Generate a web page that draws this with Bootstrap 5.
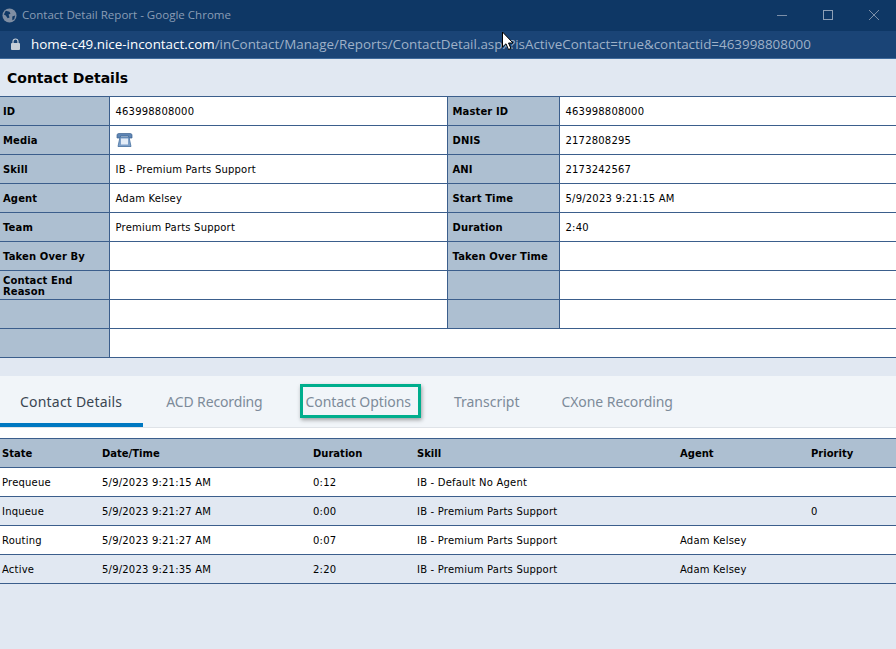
<!DOCTYPE html>
<html lang="en"><head><meta charset="utf-8"><title>Contact Detail Report</title>
<link href="https://cdn.jsdelivr.net/npm/bootstrap@5.3.0/dist/css/bootstrap.min.css" rel="stylesheet">
<style>
html,body{height:100%}
body{width:896px;height:649px;overflow:hidden;background:#e1e8f2;font-family:"DejaVu Sans",sans-serif;font-size:10px;letter-spacing:.2px;color:#000;position:relative}
.win-title{height:31px;background:#0e3765;color:#8a9db5;font:11.55px "Open Sans",sans-serif;letter-spacing:0;padding-left:2px}
.win-title .ttl{margin-left:5px;margin-bottom:2px}
.win-title svg{margin-bottom:1px}
.win-ctrls{margin-left:auto;gap:34px;padding-right:16px}
.addr{height:28px;background:#1a4476;border-bottom:1px solid #3e6a9c;font:13.4px "Open Sans",sans-serif;letter-spacing:0;color:#9fb1c8;padding-left:11px;padding-bottom:2px;white-space:nowrap}
.addr b{font-weight:400;color:#fff}
.addr svg{margin-right:11px}
.heading{height:37px;font-weight:700;font-size:14px;letter-spacing:0;padding-left:7px;padding-top:2px}
.grid-tbl{width:896px;table-layout:fixed;border-collapse:collapse;border-top:1px solid #3b5e8c;border-bottom:1px solid #3b5e8c}
.grid-tbl td{height:29px;padding:1px 0 0 6px;border:1px solid #3b5e8c;background:#fff;vertical-align:middle;line-height:11px}
.grid-tbl tr>td:first-child{border-left:0}
.grid-tbl tr>td:last-child{border-right:0}
.grid-tbl td.lbl{background:#adbfd1;font-weight:700;padding-left:3px;letter-spacing:.12px}
.grid-tbl td.lbl2{padding-left:5px}
.tabstrip{margin-top:18px;height:52px;background:#f1f5f9;border-bottom:1px solid #dfe3e8;font:14px "Noto Sans",sans-serif;letter-spacing:0;color:#7d8b99}
.tab-item{height:51px;line-height:52px;padding:0 20px;position:relative;margin-right:3px}
.tab-item.on{color:#3a4652;border-bottom:4px solid #0078c1;padding-right:21px;letter-spacing:.2px}
.tab-acd{letter-spacing:-.14px}
.tab-opt{letter-spacing:-.07px}
.tab-cx{letter-spacing:-.07px;margin-left:-1px}
.tab-item.mark-box::after{content:"";position:absolute;left:14px;right:10px;top:8px;height:34px;border:3px solid #00ae8d;box-shadow:1px 2px 4px rgba(0,0,0,.35)}
.gap-white{height:10px;background:#fff}
.st-tbl{width:896px;table-layout:fixed;border-collapse:collapse;border-top:1px solid #3b5e8c}
.st-tbl th,.st-tbl td{height:29px;padding:1px 0 0 2px;border-bottom:1px solid #3b5e8c;vertical-align:middle}
.st-tbl th{background:#adbfd1;font-weight:700;letter-spacing:0}
.st-tbl .odd td{background:#fff}
.st-tbl .even td{background:#e1e8f2}
.cursor{position:absolute;left:501px;top:31px}
.phone-ico{margin-top:-2px}
</style></head>
<body>
<div class="win-title d-flex align-items-center">
<svg width="15" height="15" viewBox="0 0 16 16"><circle cx="8" cy="8" r="7.5" fill="#7f8ea3"/><path d="M4 3l4 1 1 2-2 1 1 3-2 1-2-3-2-1zM11 9l3-1-1 4-2 1z" fill="#0e3765"/></svg>
<span class="ttl">Contact Detail Report - Google Chrome</span>
<div class="win-ctrls d-flex align-items-center">
<svg width="12" height="12" viewBox="0 0 12 12"><path d="M1 6.500h10" stroke="#7c8fa8" stroke-width="1"/></svg>
<svg width="12" height="12" viewBox="0 0 12 12"><rect x="1.500" y="1.500" width="9" height="9" fill="none" stroke="#8ea0b6"/></svg>
<svg width="12" height="12" viewBox="0 0 12 12"><path d="M1 1l10 10M11 1L1 11" stroke="#7c8fa8" stroke-width="1"/></svg>
</div></div>
<div class="addr d-flex align-items-center">
<svg width="9" height="12" viewBox="0 0 9 12"><path d="M2 5V3.500a2.500 2.500 0 0 1 5 0V5" fill="none" stroke="#c5ced9" stroke-width="1.200"/><rect y="5" width="9" height="7" rx="1" fill="#c5ced9"/></svg>
<span><b>home-c49.nice-incontact.com</b>/inContact/Manage/Reports/ContactDetail.aspx?isActiveContact=true&amp;contactid=463998808000</span>
</div>
<div class="heading d-flex align-items-center">Contact Details</div>
<table class="grid-tbl">
<colgroup><col style="width:109px"><col style="width:338px"><col style="width:112px"><col></colgroup>
<tr><td class="lbl">ID</td><td>463998808000</td><td class="lbl lbl2">Master ID</td><td>463998808000</td></tr>
<tr><td class="lbl">Media</td><td><svg class="d-block phone-ico" width="17" height="16" viewBox="0 0 17 16"><path d="M1 6V3Q1 1.500 3 1.500h11q2 0 2 1.500v3h-3.500V4h-8v2z" fill="#5f86b5" stroke="#3c628f" stroke-width=".7"/><path d="M4 5h9l2 9.500H2z" fill="#7d9fc8" stroke="#45709f" stroke-width=".8"/><rect x="5" y="6.500" width="7" height="6" fill="#e3ecf7"/></svg></td><td class="lbl lbl2">DNIS</td><td>2172808295</td></tr>
<tr><td class="lbl">Skill</td><td>IB - Premium Parts Support</td><td class="lbl lbl2">ANI</td><td>2173242567</td></tr>
<tr><td class="lbl">Agent</td><td>Adam Kelsey</td><td class="lbl lbl2">Start Time</td><td>5/9/2023 9:21:15 AM</td></tr>
<tr><td class="lbl">Team</td><td>Premium Parts Support</td><td class="lbl lbl2">Duration</td><td>2:40</td></tr>
<tr><td class="lbl">Taken Over By</td><td></td><td class="lbl lbl2">Taken Over Time</td><td></td></tr>
<tr><td class="lbl">Contact End Reason</td><td></td><td class="lbl lbl2"></td><td></td></tr>
<tr><td class="lbl"></td><td></td><td class="lbl lbl2"></td><td></td></tr>
<tr><td class="lbl"></td><td colspan="3"></td></tr>
</table>
<div class="tabstrip d-flex">
<div class="tab-item on">Contact Details</div>
<div class="tab-item tab-acd">ACD Recording</div>
<div class="tab-item tab-opt mark-box">Contact Options</div>
<div class="tab-item">Transcript</div>
<div class="tab-item tab-cx">CXone Recording</div>
</div>
<div class="gap-white"></div>
<table class="st-tbl">
<colgroup><col style="width:100px"><col style="width:211px"><col style="width:104px"><col style="width:263px"><col style="width:131px"><col></colgroup>
<tr><th>State</th><th>Date/Time</th><th>Duration</th><th>Skill</th><th>Agent</th><th>Priority</th></tr>
<tr class="odd"><td>Prequeue</td><td>5/9/2023 9:21:15 AM</td><td>0:12</td><td>IB - Default No Agent</td><td></td><td></td></tr>
<tr class="even"><td>Inqueue</td><td>5/9/2023 9:21:27 AM</td><td>0:00</td><td>IB - Premium Parts Support</td><td></td><td>0</td></tr>
<tr class="odd"><td>Routing</td><td>5/9/2023 9:21:27 AM</td><td>0:07</td><td>IB - Premium Parts Support</td><td>Adam Kelsey</td><td></td></tr>
<tr class="even"><td>Active</td><td>5/9/2023 9:21:35 AM</td><td>2:20</td><td>IB - Premium Parts Support</td><td>Adam Kelsey</td><td></td></tr>
</table>
<svg class="cursor" width="13" height="20" viewBox="0 0 13 20"><path d="M1.500 1v15l3.500-3.200 2.500 5.700 2.500-1-2.500-5.500h4.500z" fill="#fff" stroke="#000" stroke-width="1"/></svg>
<script src="https://cdn.jsdelivr.net/npm/bootstrap@5.3.0/dist/js/bootstrap.bundle.min.js"></script>
</body></html>
